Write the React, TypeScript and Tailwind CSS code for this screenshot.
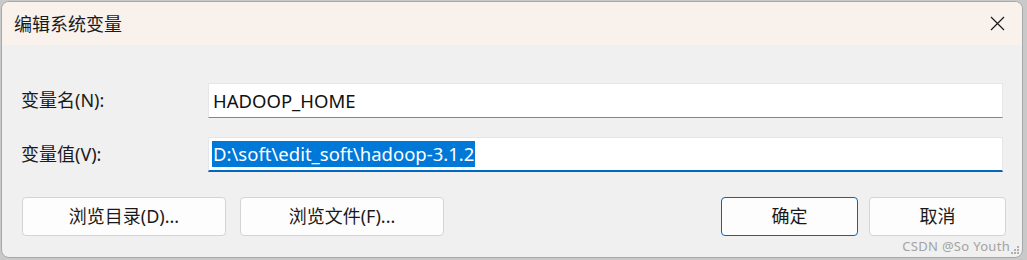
import React from "react";

const font = { fontFamily: "'Noto Sans', 'Noto Sans CJK SC', sans-serif" };

const App: React.FC = () => {
  return (
    <div className="w-[1027px] h-[260px] bg-[#c9c9c9] pt-[1px] pl-[1px] overflow-hidden" style={font}>
      <div className="relative w-[1022px] h-[257px] bg-[#f0f0f0] border border-[#a8a8a8] rounded-[8px] overflow-hidden flex flex-col">
        {/* title bar */}
        <div className="h-[43px] shrink-0 bg-[#f9f1ec] flex items-center justify-between pl-[12px] pr-[12px]">
          <span className="text-[18px] text-[#1a1a1a] leading-none">编辑系统变量</span>
          <button className="w-[20px] h-[20px] flex items-center justify-center mr-[3px]">
            <svg width="15" height="15" viewBox="0 0 15 15">
              <path d="M1 1 L14 14 M14 1 L1 14" stroke="#1a1a1a" strokeWidth="1.2" />
            </svg>
          </button>
        </div>

        {/* form */}
        <div className="flex flex-col pt-[38px] pl-[19px] pr-[18px]">
          <div className="flex items-center h-[35px]">
            <label className="w-[187px] text-[18px] text-[#1a1a1a]">变量名(N):</label>
            <div className="w-[795px] h-[35px] bg-white border border-[#e6e6e6] border-b-[#868686] flex items-center pl-[4px] text-[18.5px] text-[#111]">
              HADOOP_HOME
            </div>
          </div>
          <div className="flex items-center h-[35px] mt-[19px]">
            <label className="w-[187px] text-[18px] text-[#1a1a1a]">变量值(V):</label>
            <div className="w-[795px] h-[35px] bg-white border border-[#e6e6e6] border-b-2 border-b-[#0067c0] flex items-center pl-[3px]">
              <span className="bg-[#0078d7] text-white text-[18.5px] leading-[26px] px-[1px]">
                D:\soft\edit_soft\hadoop-3.1.2
              </span>
            </div>
          </div>
        </div>

        {/* buttons */}
        <div className="flex items-center mt-[25px] pl-[20px] pr-[16px] text-[18px] text-[#1a1a1a]">
          <button className="w-[204px] h-[39px] bg-[#fdfdfd] border border-[#d4d4d4] rounded-[4px]">浏览目录(D)...</button>
          <button className="w-[204px] h-[39px] bg-[#fdfdfd] border border-[#d4d4d4] rounded-[4px] ml-[14px]">浏览文件(F)...</button>
          <div className="flex-1" />
          <button className="w-[137px] h-[39px] bg-[#fdfdfd] border border-[#0067c0] rounded-[4px]">确定</button>
          <button className="w-[137px] h-[39px] bg-[#fdfdfd] border border-[#d4d4d4] rounded-[4px] ml-[11px]">取消</button>
        </div>

        {/* watermark + grip */}
        <span className="absolute right-[12px] bottom-[1px] text-[13px] text-[#a3a3a3] tracking-[0.3px]">CSDN @So Youth</span>
        <svg className="absolute right-[2px] bottom-[2px]" width="10" height="10" viewBox="0 0 10 10">
          <rect x="7" y="1" width="2" height="2" fill="#b0b0b0" />
          <rect x="4" y="4" width="2" height="2" fill="#b0b0b0" />
          <rect x="7" y="4" width="2" height="2" fill="#b0b0b0" />
          <rect x="1" y="7" width="2" height="2" fill="#b0b0b0" />
          <rect x="4" y="7" width="2" height="2" fill="#b0b0b0" />
          <rect x="7" y="7" width="2" height="2" fill="#b0b0b0" />
        </svg>
      </div>
    </div>
  );
};

export default App;
